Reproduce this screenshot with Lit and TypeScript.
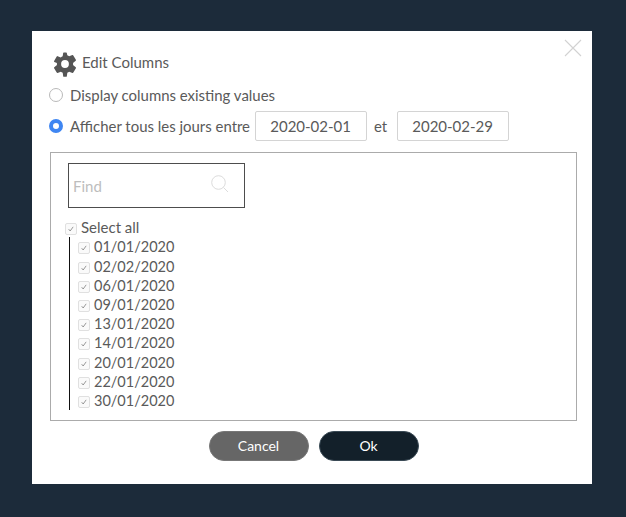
import { LitElement, html, css } from "lit";
import { customElement } from "lit/decorators.js";

const dates = ["01/01/2020","02/02/2020","06/01/2020","09/01/2020","13/01/2020","14/01/2020","20/01/2020","22/01/2020","30/01/2020"];

@customElement("app-root")
export class AppRoot extends LitElement {
  static styles = css`
    :host { display: block; width: 626px; height: 517px; background: #1c2b3a; font-family: Lato, "Liberation Sans", sans-serif; color: #5a5a5a; overflow: hidden; }
    .page { padding: 31px 34px 33px 32px; box-sizing: border-box; height: 517px; }
    .modal { position: relative; background: #fff; height: 453px; box-sizing: border-box; padding: 20px 15px 0 17px; }
    .close { position: absolute; right: 10px; top: 8px; width: 18px; height: 18px; }
    .title { display: flex; align-items: center; gap: 4px; height: 22px; padding-left: 3px; font-size: 15px; line-height: 22px; }
    .gear { width: 26px; height: 26px; display: block; margin-top: 3px; flex: none; }
    .row { display: flex; align-items: center; font-size: 14.95px; }
    .r1 { margin-top: 11px; height: 22px; }
    .r2 { margin-top: 5px; height: 30px; }
    .radio { width: 14px; height: 14px; border-radius: 50%; box-sizing: border-box; border: 1px solid #b9b9b9; background: #fff; margin-right: 7px; flex: none; }
    .radio.on { border: 4.5px solid #3f86f2; background: #fff; }
    .date { width: 112px; height: 30px; box-sizing: border-box; border: 1px solid #d4d4d4; border-radius: 2px; display: flex; align-items: center; justify-content: center; font-size: 15px; flex: none; }
    .gap { flex: none; width: 4.6px; }
    .et { margin: 0 9px 0 7px; width: 14px; text-align: center; flex: none; }
    .panel { margin-top: 11px; margin-left: 1px; width: 527px; height: 269px; box-sizing: border-box; border: 1px solid #ababab; padding: 10px 0 0 17px; }
    .find { width: 177px; height: 45px; box-sizing: border-box; border: 1px solid #4d4d4d; display: flex; align-items: center; justify-content: space-between; padding: 0 14px 0 4px; color: #bdbdbd; font-size: 15px; }
    .search { width: 20px; height: 20px; margin-top: -3px; }
    .all { display: flex; align-items: center; margin: 10px 0 0 -3px; height: 19px; font-size: 15px; line-height: 19px; }
    .check { width: 12px; height: 12px; box-sizing: border-box; border: 1px solid #e0e0e0; border-radius: 2px; background: #fafafa; margin-right: 4px; margin-top: 3px; flex: none; display: block; }
    .tree { border-left: 1px solid #111; margin: 0 0 0 1px; padding: 0.4px 0 0 8px; height: 173px; box-sizing: border-box; }
    .item { display: flex; align-items: center; height: 19.2px; font-size: 14.5px; }
    .actions { display: flex; justify-content: center; gap: 10px; margin-top: 10px; padding-left: 1px; }
    button { all: unset; box-sizing: border-box; width: 100px; height: 30px; border-radius: 15px; font: inherit; font-size: 14px; color: #fff; text-align: center; line-height: 28px; }
    .cancel { background: #666; border: 1px solid #777; }
    .ok { background: #13202a; border: 1px solid #3a4a55; }
  `;

  private check() {
    return html`<svg class="check" viewBox="0 0 12 12"><path d="M3.2 6.2 L5 8.4 L8.6 3.4" fill="none" stroke="#777" stroke-width="0.9"/></svg>`;
  }

  render() {
    return html`<div class="page"><div class="modal">
      <svg class="close" viewBox="0 0 18 18"><path d="M1 1 L17 17 M17 1 L1 17" stroke="#d2d2d2" stroke-width="1.1" fill="none"/></svg>
      <div class="title">
        <svg class="gear" viewBox="0 0 24 24"><path fill="#555" fill-rule="evenodd" d="M19.4 13c.05-.33.08-.66.08-1s-.03-.67-.08-1l2.5-1.95a.7.7 0 0 0 .15-.86l-2.4-4.14a.7.7 0 0 0-.85-.3l-2.95 1.18a8.6 8.6 0 0 0-1.73-1L13.67 1.8a.6.6 0 0 0-.6-.5H10.9a.6.6 0 0 0-.6.5l-.45 3.13a8.6 8.6 0 0 0-1.73 1L5.2 4.75a.7.7 0 0 0-.85.3L1.95 9.2a.7.7 0 0 0 .15.86L4.6 11c-.05.33-.08.67-.08 1s.03.67.08 1l-2.5 1.95a.7.7 0 0 0-.15.86l2.4 4.14c.15.27.5.37.85.3l2.95-1.18c.54.4 1.1.74 1.73 1l.45 3.13c.05.3.3.5.6.5h2.17c.3 0 .55-.2.6-.5l.45-3.13a8.6 8.6 0 0 0 1.73-1l2.95 1.18c.35.07.7-.03.85-.3l2.4-4.14a.7.7 0 0 0-.15-.86zM12 15.6a3.6 3.6 0 1 1 0-7.2 3.6 3.6 0 0 1 0 7.2z"/></svg>
        <span>Edit Columns</span>
      </div>
      <div class="row r1"><span class="radio"></span>Display columns existing values</div>
      <div class="row r2"><span class="radio on"></span>Afficher tous les jours entre<span class="gap"></span><span class="date">2020-02-01</span><span class="et">et</span><span class="date">2020-02-29</span></div>
      <div class="panel">
        <div class="find"><span>Find</span>
          <svg class="search" viewBox="0 0 20 20"><circle cx="8.5" cy="8.5" r="6.8" fill="none" stroke="#dcdcdc" stroke-width="1"/><path d="M13.5 13.5 L18 18" stroke="#dcdcdc" stroke-width="1"/></svg>
        </div>
        <div class="all">${this.check()}<span>Select all</span></div>
        <div class="tree">${dates.map((d) => html`<div class="item">${this.check()}<span>${d}</span></div>`)}</div>
      </div>
      <div class="actions"><button class="cancel">Cancel</button><button class="ok">Ok</button></div>
    </div></div>`;
  }
}
